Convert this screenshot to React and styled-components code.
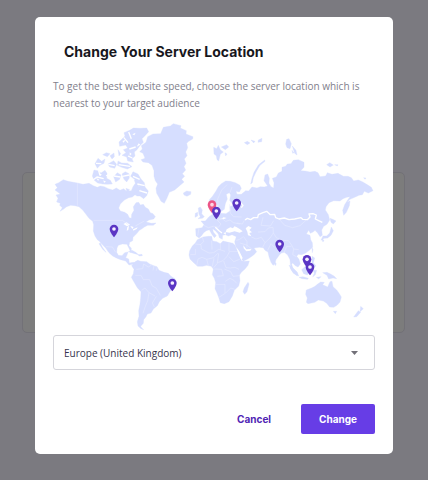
import React from "react";
import styled, { createGlobalStyle } from "styled-components";

const GlobalStyle = createGlobalStyle`
  *, *::before, *::after { box-sizing: border-box; }
  body {
    margin: 0;
    background: #7b7a80;
    font-family: Inter, "Open Sans", "Liberation Sans", sans-serif;
  }
`;

const Page = styled.div`
  min-height: 100vh;
  padding: 172px 23px 0 22px;
`;

const BackgroundCard = styled.div`
  height: 161px;
  border: 1px solid #727177;
  border-radius: 5px;
  background: #7c7c7c;
`;

const Overlay = styled.div`
  position: fixed;
  inset: 0;
  overflow: auto;
  padding: 17px 35px 26px;
`;

const Dialog = styled.section`
  padding: 24px 18px 20px;
  border-radius: 5px;
  background: #fff;
`;

const Title = styled.h1`
  margin: 0;
  padding: 0 11px;
  color: #18171d;
  font: 700 14px/22px Inter, "Open Sans", sans-serif;
`;

const Description = styled.p`
  margin: 15px 0 8px;
  color: #81808c;
  font: 400 10px/17px "Open Sans", Inter, sans-serif;
`;

const Map = styled.svg`
  display: block;
  width: 100%;
  height: auto;
`;

const Land = styled.path`
  fill: #d6deff;
  stroke: #d6deff;
  stroke-width: 1;
  stroke-linejoin: round;
`;

const Water = styled.path`
  fill: #fff;
`;

const Border = styled.path`
  fill: none;
  stroke: ${(p) => (p.$strong ? "#fff" : "#e6eaff")};
  stroke-width: ${(p) => (p.$strong ? 4 : 2)};
  stroke-linejoin: round;
`;

const PinShape = styled.path`
  fill: ${(p) => (p.$active ? "#ec5586" : "#5b36c4")};
`;

const SelectBox = styled.div`
  display: grid;
  align-items: center;
  margin-top: 3px;
`;

const Select = styled.select`
  grid-area: 1 / 1;
  width: 100%;
  height: 35px;
  padding: 0 32px 0 10px;
  border: 1px solid #d5d5db;
  border-radius: 3px;
  background: #fff;
  color: #36344d;
  font: 400 10px/16px "Open Sans", Inter, sans-serif;
  appearance: none;
`;

const Caret = styled.svg`
  grid-area: 1 / 1;
  justify-self: end;
  width: 7px;
  height: 4px;
  margin-right: 17px;
  fill: #727078;
  pointer-events: none;
`;

const Actions = styled.div`
  display: flex;
  justify-content: flex-end;
  gap: 12px;
  margin-top: 34px;
`;

const Button = styled.button`
  height: 30px;
  padding: 0 18px;
  border: 0;
  border-radius: 2px;
  background: ${(p) => (p.$primary ? "#673de6" : "transparent")};
  color: ${(p) => (p.$primary ? "#fff" : "#5025b4")};
  font: 700 10px/16px Inter, "Open Sans", sans-serif;
  cursor: pointer;
`;

const land = [
  // North America
  "M165 570 L172 563 165 553 176 548 190 539 204 544 232 549 249 553 267 550 280 557 292 562 301 558 313 560 325 566 338 570 349 564 360 571 371 566 380 574 394 572 399 560 406 550 403 541 412 535 419 546 415 558 423 563 421 575 413 581 405 584 397 591 386 593 373 600 361 612 356 624 361 633 374 637 383 643 388 653 394 655 395 643 402 631 400 620 408 608 416 607 421 615 430 613 436 622 445 627 451 638 459 641 466 650 461 657 447 660 438 666 454 670 468 669 460 676 443 676 433 681 425 687 418 691 411 700 405 706 399 712 398 722 389 727 387 737 394 745 393 758 388 747 381 733 367 732 355 736 351 744 350 757 355 766 366 767 374 758 384 756 381 765 377 773 386 777 388 789 400 787 406 790 398 793 387 795 377 783 362 779 349 774 338 768 327 758 317 744 306 733 300 725 292 719 285 708 280 693 281 674 278 664 267 655 258 643 248 630 237 620 225 617 212 616 200 620 190 628 180 634 187 623 179 616 181 610 170 606 174 595 168 585 181 582 Z",
  "M301 728 L307 741 318 757 308 748 297 731Z",
  // Canadian Arctic islands
  "M277 528 L282 510 293 512 303 519 315 511 321 520 320 535 331 541 337 552 321 553 308 552 293 549 282 540Z",
  "M357 426 L375 408 372 398 389 391 400 384 421 385 440 384 446 395 435 407 426 416 430 427 419 438 411 449 403 456 405 468 396 476 400 486 383 483 380 471 366 466 378 458 370 449 383 444 377 435 359 439Z",
  "M392 529 L399 515 414 522 423 537 433 548 435 561 445 573 440 587 431 596 420 588 411 588 401 582 414 574 423 569 415 554 407 541Z",
  "M366 522 L376 515 387 521 388 534 380 546 372 538Z M341 530 L352 518 363 525 359 538 347 546Z M324 492 L341 482 350 493 344 505 329 501Z M285 491 L294 475 305 484 315 477 312 490 300 496 292 505Z M308 464 L319 458 330 461 322 470Z M330 467 L342 459 343 470 336 477Z M354 483 L365 489 383 490 396 500 382 507 365 502 352 496Z M354 449 L362 461 357 468Z M378 565 L389 569 381 578Z",
  // Greenland
  "M429 460 L419 455 427 447 424 437 438 427 443 410 459 402 482 401 490 382 511 378 520 371 543 377 541 384 559 392 558 402 579 410 578 417 566 424 560 430 563 443 557 456 561 467 553 477 558 490 552 500 557 510 547 521 554 529 545 538 552 546 539 557 524 570 508 577 501 594 493 610 483 604 477 592 470 580 468 565 473 552 466 542 462 529 462 512 456 496 445 488 429 486 423 479 435 475Z",
  "M550 579 L560 573 573 575 572 583 561 589 552 585Z",
  // Caribbean
  "M385 755 L396 751 407 757 416 764 404 761Z M415 764 L426 763 427 767 417 768Z",
  // South America
  "M395 797 L404 786 413 781 422 784 440 785 449 792 461 797 471 800 477 811 492 817 505 820 513 829 525 836 529 847 519 862 509 876 502 888 488 895 478 905 472 917 460 927 453 939 442 942 438 950 431 959 430 970 422 979 426 985 431 989 423 986 414 978 412 965 417 949 416 932 420 912 422 894 423 875 412 863 402 846 394 832 400 821 402 808Z",
  // Europe and Asia
  "M588 707 L587 686 606 683 612 674 603 663 616 663 627 650 639 642 646 634 645 624 657 628 662 640 678 641 691 632 690 620 703 614 713 615 721 607 709 603 697 611 689 601 692 585 688 578 679 583 682 597 676 611 673 628 662 635 656 624 650 612 642 614 629 610 628 599 638 588 648 573 655 560 664 551 677 543 691 544 706 548 719 555 724 565 718 576 708 574 711 583 724 583 737 572 746 573 756 561 771 564 781 560 793 561 803 558 792 542 795 525 803 522 808 535 807 550 813 560 821 564 822 548 817 535 829 531 835 519 846 514 846 502 857 499 862 492 873 491 880 481 895 479 912 487 912 502 902 512 915 513 930 516 945 514 954 518 960 530 977 528 982 518 996 523 1014 520 1030 529 1044 529 1054 533 1061 543 1075 540 1087 545 1100 553 1114 562 1119 572 1105 579 1093 574 1087 584 1077 586 1066 591 1050 598 1041 607 1050 603 1048 617 1039 637 1031 646 1028 631 1034 614 1043 600 1050 590 1040 592 1029 596 1020 603 1001 602 987 608 978 620 976 630 985 644 989 660 981 673 971 679 965 690 967 706 960 710 953 699 945 691 939 696 931 700 926 691 919 702 930 706 932 719 937 728 938 742 928 751 917 759 905 764 895 763 890 769 897 778 901 792 894 801 886 797 878 789 875 793 879 805 888 815 888 823 880 820 872 806 871 791 870 779 863 765 853 757 844 759 838 765 828 779 824 793 819 796 813 787 807 770 804 756 795 751 790 743 778 742 762 744 770 755 761 765 747 775 730 784 724 777 717 758 708 743 704 725 709 710 696 704 685 708 676 704 668 706 667 718 658 713 655 702 646 692 638 686 640 696 649 707 643 713 635 702 628 689 619 692 611 698 604 708 597 714Z",
  // Africa
  "M592 719 L609 711 625 709 635 709 638 723 650 725 661 731 669 723 685 727 699 730 705 736 713 755 725 783 735 784 748 783 744 796 735 807 724 817 718 826 720 842 716 858 703 871 697 888 687 905 673 911 661 908 657 895 651 879 645 866 647 848 643 835 637 824 640 807 634 799 620 796 608 799 593 799 581 788 570 777 567 765 569 752 577 738 586 729Z",
  "M733 863 L744 847 747 852 741 875 734 883 729 875Z",
  // Britain and Ireland
  "M596 636 L595 624 601 621 607 630 605 641 613 650 607 655 594 656 601 650 597 643Z M586 640 L593 637 593 648 585 652Z",
  // Northern islands
  "M641 442 L650 446 655 436 661 449 670 456 661 463 656 483 651 479 649 467 642 462Z M664 441 L680 434 686 441 676 449Z M675 458 L681 462 677 468Z",
  "M752 552 L756 535 762 517 775 495 794 480 795 484 780 496 768 516 760 533 757 548Z",
  "M860 418 L867 416 874 431 870 446 861 443 857 432Z M877 438 L888 451 891 465 884 460Z M876 451 L882 458 878 460Z M733 428 L742 424 750 429 742 434Z M753 420 L765 424 761 429Z M775 420 L786 415 785 425 774 427Z M980 494 L989 488 1000 495 990 501Z M1004 494 L1014 494 1012 498Z M1091 533 L1098 534 1095 538Z",
  // East and south-east Asia
  "M990 655 L998 658 1008 663 1000 672 993 667Z M994 681 L1000 692 993 706 983 714 973 715 963 721 969 708 980 708 989 699Z M965 717 L972 721 969 726Z M936 744 L939 748 937 758Z M936 769 L944 774 940 788 948 798 943 801 936 789Z M867 795 L878 803 892 817 896 828 888 826 874 810Z M897 832 L909 830 925 835 923 838 906 836Z M905 809 L915 800 925 798 933 811 922 825 911 821Z M938 811 L950 811 946 824 938 831 943 819Z M968 818 L981 817 990 821 1002 828 1010 836 999 834 986 837 981 826Z M949 832 L963 830 956 837Z",
  // Australia and New Zealand
  "M919 870 L935 864 945 859 952 853 962 846 973 847 968 854 983 861 990 845 996 844 999 860 1010 870 1018 881 1024 891 1020 906 1011 916 1001 922 989 921 980 910 970 903 955 900 944 907 924 911 919 907 922 894 917 883Z M1000 934 L1010 934 1006 941Z M1082 919 L1090 926 1080 935 1081 928Z M1075 932 L1082 937 1070 950 1061 951 1067 943Z M824 786 L829 791 826 797Z",
];

const water = [
  "M370 672 L380 667 390 674 381 679 Z M382 681 L387 677 385 690 380 692Z M391 678 L401 681 397 687Z M399 688 L413 682 410 687 400 692Z",
  "M680 688 L691 682 699 685 703 679 709 681 719 687 728 694 719 698 704 694 688 698 677 696Z",
  "M737 685 L745 678 755 683 748 690 756 697 748 699 754 709 744 706 742 695Z",
  "M708 740 L718 754 728 774 724 780 716 762Z M730 736 L739 748 754 747 751 752 739 754 731 745Z",
  "M317 526 L326 523 332 534 323 532Z M397 403 L407 398 403 406Z M367 423 L377 419 371 428Z M389 457 L395 462 389 467Z M416 430 L421 434 410 440Z",
  "M298 520 L305 523 302 529Z M288 533 L298 539 294 542Z M310 541 L318 545 312 548Z",
  "M663 656 L671 652 680 654 670 658Z M670 699 L678 697 677 704Z",
];

const strongBorders = [
  "M735 660 L742 655 752 659 761 653 773 653 775 644 789 638 800 634 811 644 824 643 827 653 837 657 853 654 867 659 884 657 903 653 908 658 922 659 930 651 927 642 939 641 949 645 946 657 956 662 967 667",
  "M721 607 L729 616 724 623 M646 682 L657 692 666 699 M822 496 L813 522",
  "M278 541 L291 531 311 536 M296 512 L300 527 M341 528 L361 531 M367 529 L388 525 M325 493 L344 497 M288 490 L304 491 M356 494 L390 499 M399 529 L419 538 M412 552 L434 557 M418 572 L441 579 M371 412 L384 428 M386 396 L394 416 M407 441 L388 447 M384 468 L397 474",
];

const borders = [
  "M232 549 V617 M281 661 H367 L385 674 M406 678 L433 663 M318 740 L337 741 347 757",
  "M586 732 L603 734 604 747 627 759 641 758 656 748 675 754 M571 764 L586 764 586 747 M607 711 L611 725 601 734 M635 722 L636 749 M661 731 V750 M687 728 V754 H711 M590 797 L594 777 606 772 620 778 625 796 M620 778 L641 773 653 760 M642 775 L637 799 M656 760 L652 790 641 803 M653 788 L669 782 681 769 688 756 M687 770 L701 785 719 778 M671 783 L678 803 691 804 705 802 717 808 M643 807 L665 808 670 827 652 829 M673 807 L692 815 699 829 718 827 M648 853 H675 V879 M676 844 L690 835 702 841 710 850 M657 892 L677 879 692 864 704 868",
  "M409 808 L428 806 431 792 445 801 455 795 M406 826 L423 826 430 839 449 839 456 857 469 865 481 886 M425 871 L435 864 447 878 465 888 M447 878 L443 902 435 922 429 940 M469 889 L457 909 463 921 M472 801 L469 812 M462 797 L459 811",
  "M611 676 L625 683 640 679 655 682 663 672 652 661 667 656 677 664 690 660 700 668 720 672 M639 644 L649 653 667 657 M597 685 L593 707 M689 613 L691 639 700 650 725 651 M655 628 L653 597 665 570 681 554 M690 578 L696 561 M730 710 L719 718 709 721 M731 710 L741 725 741 743 M754 711 L768 717 784 712 795 728 788 742 M774 696 L795 695 805 684 819 682 820 699 810 714 795 728 M820 699 L829 713 847 721 865 722 874 734 881 747 896 749 M823 742 L813 731 803 751 M853 756 L860 739 874 739 M881 747 L878 764 889 770 M789 652 L783 676 811 678 821 662 M837 657 L854 676 878 683 900 677 919 660 M710 669 L727 672 733 661 M720 729 L742 736 757 749",
];

const locations = [
  { x: 636, y: 639, active: true },
  { x: 649, y: 658 },
  { x: 710, y: 634 },
  { x: 342, y: 712 },
  { x: 517, y: 874 },
  { x: 839, y: 757 },
  { x: 921, y: 803 },
  { x: 930, y: 826 },
];

function Pin({ x, y, active }) {
  return (
    <g transform={`translate(${x} ${y})`}>
      <PinShape
        $active={active}
        d="M0 0C0 0-13-15-13-25A13 13 0 0 1 13-25C13-15 0 0 0 0Z"
      />
      <circle cy="-25" r="5.5" fill={active ? "#ffd4e2" : "#f4f0ff"} />
    </g>
  );
}

function WorldMap() {
  return (
    <Map viewBox="159 360 966 636" role="img" aria-label="Server locations">
      {land.map((d) => <Land key={d} d={d} />)}
      {water.map((d) => <Water key={d} d={d} />)}
      {borders.map((d) => <Border key={d} d={d} />)}
      {strongBorders.map((d) => <Border key={d} d={d} $strong />)}
      {locations.map((l) => <Pin key={`${l.x}-${l.y}`} {...l} />)}
    </Map>
  );
}

export default function App() {
  return (
    <>
      <GlobalStyle />
      <Page>
        <BackgroundCard />
      </Page>
      <Overlay>
        <Dialog role="dialog" aria-modal="true" aria-labelledby="dialog-title">
          <Title id="dialog-title">Change Your Server Location</Title>
          <Description>
            To get the best website speed, choose the server location which is
            nearest to your target audience
          </Description>
          <WorldMap />
          <SelectBox>
            <Select aria-label="Server location" defaultValue="uk">
              <option value="uk">Europe (United Kingdom)</option>
            </Select>
            <Caret viewBox="0 0 7 4" aria-hidden="true">
              <path d="M0 0H7L3.5 4Z" />
            </Caret>
          </SelectBox>
          <Actions>
            <Button type="button">Cancel</Button>
            <Button type="button" $primary>Change</Button>
          </Actions>
        </Dialog>
      </Overlay>
    </>
  );
}
